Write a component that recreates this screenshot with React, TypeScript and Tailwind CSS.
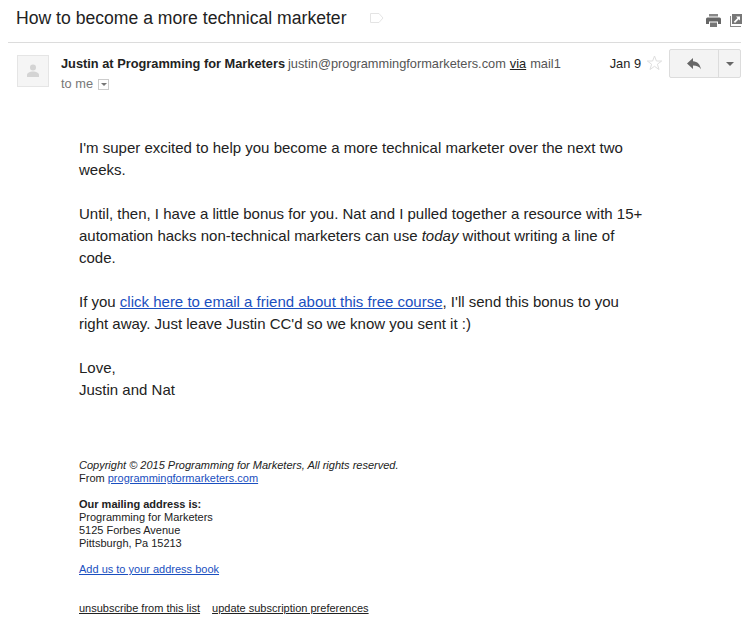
import React from 'react';

const Label = () => (
  <svg width="14" height="10" viewBox="0 0 14 10" className="ml-[23px]">
    <path d="M.5.5h8.500l4 4.500-4 4.500H.5z" fill="none" stroke="#e4e4e4" />
  </svg>
);

const PrintIcon = () => (
  <svg width="15" height="13" viewBox="0 0 15 13">
    <path d="M3 0h9v2.500H3z" fill="#888" />
    <path d="M1.500 3.500h12A1.500 1.500 0 0 1 15 5v5h-3V7.500H3V10H0V5a1.500 1.500 0 0 1 1.500-1.500z" fill="#666" />
    <path d="M4 8.500h7V13H4z" fill="#777" />
  </svg>
);

const PopoutIcon = () => (
  <svg width="12" height="13" viewBox="0 0 12 13" className="ml-[9px]">
    <path d="M2 0h10v10H2z" fill="#777" />
    <path d="M0 2h1v10h10v1H0z" fill="#888" />
    <path d="M6 2.500h4v4L8.700 5.200 5 9 3.800 7.800 7.500 4z" fill="#fff" />
  </svg>
);

const Avatar = () => (
  <div className="w-8 h-8 shrink-0 bg-[#f5f5f5] border border-[#e5e5e5] flex items-center justify-center">
    <svg width="14" height="14" viewBox="0 0 14 14">
      <circle cx="7" cy="3.500" r="3" fill="#d4d4d4" />
      <path d="M1 13v-2c0-2 3-3.500 6-3.500s6 1.500 6 3.500v2z" fill="#d4d4d4" />
    </svg>
  </div>
);

const Star = () => (
  <svg width="17" height="16" viewBox="0 0 17 16" className="ml-[5px]">
    <path d="M8.500 1l1.900 5h5.300l-4.300 3.200 1.600 5.300-4.500-3.200-4.500 3.200 1.600-5.300L1.300 6h5.300z" fill="none" stroke="#dedede" />
  </svg>
);

const ReplyIcon = () => (
  <svg width="14" height="12" viewBox="0 0 14 12">
    <path d="M6 0v3.200c4.500.3 7 3 8 8-1.700-2.700-4-3.800-8-3.800V11L0 5.500z" fill="#666" />
  </svg>
);

export default function App() {
  return (
    <div className="w-[752px] h-[629px] overflow-hidden bg-white text-[#222]" style={{ fontFamily: '"Liberation Sans", Arial, sans-serif' }}>
      {/* subject */}
      <div className="h-[43px] ml-2 mr-[11px] border-b border-[#dcdcdc] flex items-start">
        <div className="ml-2 mt-[6px] text-[17.6px] leading-[24px] flex items-center">
          How to become a more technical marketer
          <Label />
        </div>
        <div className="ml-auto mt-[14px] -mr-[1px] flex items-start">
          <PrintIcon />
          <PopoutIcon />
        </div>
      </div>

      {/* sender row */}
      <div className="flex ml-[17px] mt-[12px] mr-[11px]">
        <Avatar />
        <div className="ml-3 flex-1 min-w-0">
          <div className="text-[12.8px] leading-[16px] mt-[1px] flex items-center">
            <span className="font-bold">Justin at Programming for Marketers</span>
            <span className="ml-[3px] text-[#555]">justin@programmingformarketers.com</span>
            <span className="ml-1 text-[#222] underline">via</span>
            <span className="ml-1 text-[#555]">mail1</span>
          </div>
          <div className="text-[12.8px] leading-[16px] mt-[4px] text-[#777] flex items-center">
            to me
            <span className="ml-[5px] w-[11px] h-[11px] border border-[#ccc] flex items-center justify-center">
              <span className="border-x-[3px] border-t-[3px] border-x-transparent border-t-[#777]" />
            </span>
          </div>
        </div>
        <div className="flex items-start shrink-0">
          <span className="text-[12.8px] leading-[16px] mt-[1px] text-[#222]">Jan 9</span>
          <Star />
          <div className="ml-[6px] -mt-[6px] flex h-[29px] w-[72px] rounded-[2px] border border-[#dcdcdc] bg-[#f3f3f3]">
            <div className="w-[49px] border-r border-[#dcdcdc] flex items-center justify-center">
              <ReplyIcon />
            </div>
            <div className="flex-1 flex items-center justify-center">
              <span className="border-x-[4px] border-t-[4px] border-x-transparent border-t-[#666]" />
            </div>
          </div>
        </div>
      </div>

      {/* body */}
      <div className="ml-[79px] mr-[100px] mt-[45px] text-[15px] leading-[22px] text-[#222]">
        <p>I'm super excited to help you become a more technical marketer over the next two weeks.</p>
        <p className="mt-[22px]">
          Until, then, I have a little bonus for you. Nat and I pulled together a resource with 15+ automation hacks non-technical marketers can use <em>today</em> without writing a line of code.
        </p>
        <p className="mt-[22px]">
          If you <a className="text-[#1a4fc0] underline">click here to email a friend about this free course</a>, I'll send this bonus to you right away. Just leave Justin CC'd so we know you sent it :)
        </p>
        <p className="mt-[22px]">Love,<br />Justin and Nat</p>
      </div>

      {/* footer */}
      <div className="ml-[79px] mt-[58px] text-[11px] leading-[13px] text-[#222]">
        <em>Copyright © 2015 Programming for Marketers, All rights reserved.</em>
        <br />
        From <a className="text-[#1a4fc0] underline">programmingformarketers.com</a>
        <div className="mt-[13px]">
          <strong>Our mailing address is:</strong>
          <br />Programming for Marketers
          <br />5125 Forbes Avenue
          <br />Pittsburgh, Pa 15213
        </div>
        <div className="mt-[13px]">
          <a className="text-[#1a4fc0] underline">Add us to your address book</a>
        </div>
        <div className="mt-[26px] flex gap-3">
          <a className="underline">unsubscribe from this list</a>
          <a className="underline">update subscription preferences</a>
        </div>
      </div>
    </div>
  );
}
